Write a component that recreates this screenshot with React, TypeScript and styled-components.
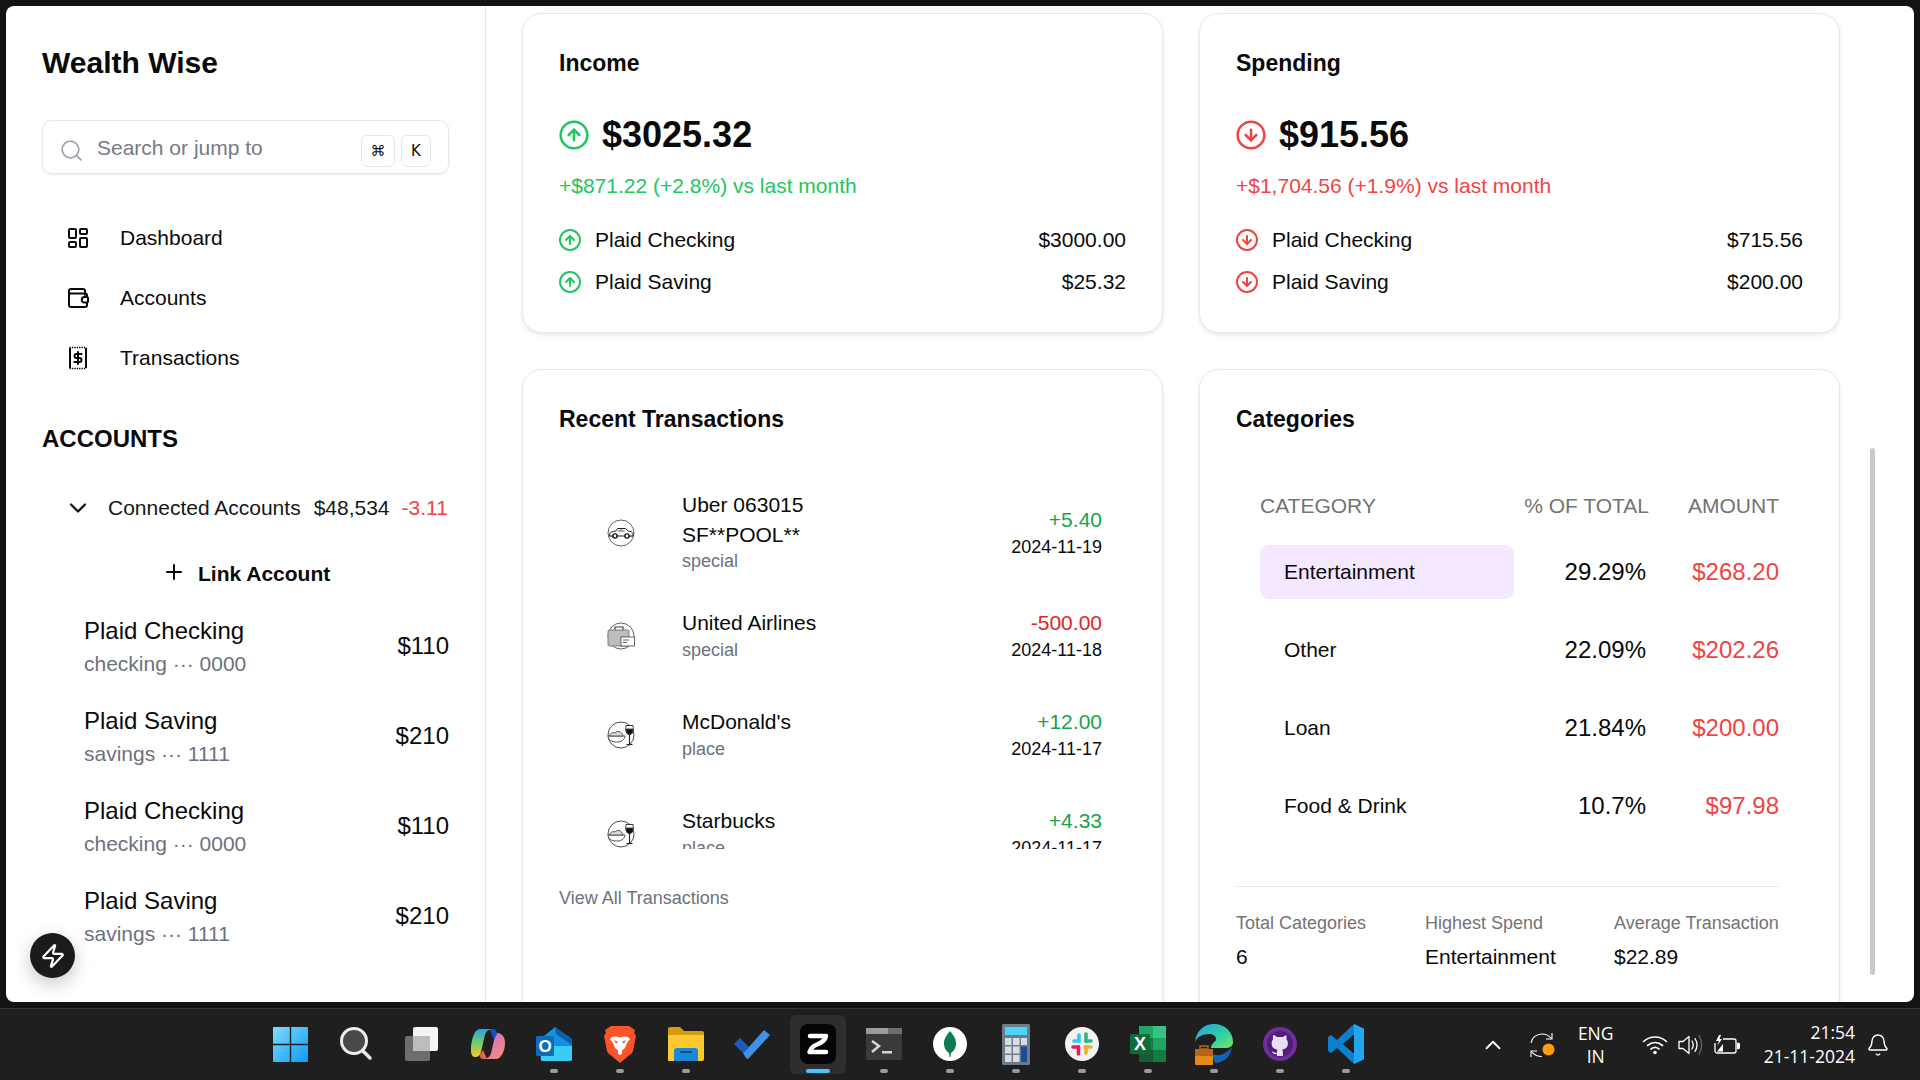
import React from "react";
import styled, { createGlobalStyle } from "styled-components";
import { CircleArrowUp, CircleArrowDown, LayoutDashboard, Search, ChevronDown, ChevronUp, Plus, Zap, Bell } from "lucide-react";

const Global = createGlobalStyle`
  html, body { margin: 0; padding: 0; width: 1920px; height: 1080px; overflow: hidden; background: #121312; }
  * { box-sizing: border-box; }
  body { font-family: "Liberation Sans", Arial, sans-serif; color: #0a0a0a; }
`;

const Screen = styled.div`
  width: 1920px; height: 1080px; display: flex; flex-direction: column; background: #121312;
`;
const Window = styled.div`
  position: relative; margin: 6px 6px 0; height: 996px; background: #fff; border-radius: 8px; overflow: hidden; display: flex; flex: none;
`;
const Sidebar = styled.aside`
  width: 480px; flex: none; border-right: 1px solid #e5e7eb; padding: 39px 36px 0; display: flex; flex-direction: column;
`;
const Brand = styled.h1`
  margin: 0; font-size: 30px; line-height: 36px; font-weight: 700; color: #0a0a0a;
`;
const SearchBox = styled.div`
  margin-top: 39px; height: 54px; border: 1px solid #e5e7eb; border-radius: 10px; display: flex; align-items: center;
  padding: 0 17px 0 17px; box-shadow: 0 1px 3px rgba(0,0,0,.08); color: #9ca3af;
`;
const SearchGlyph = styled.span` display: flex; margin-top: 7px; margin-left: -1px; `;
const Placeholder = styled.span`
  margin-left: 13px; font-size: 21px; color: #767b85; flex: 1; padding-top: 1px; margin-bottom: -1px;
`;
const Key = styled.span<{ $w: number }>`
  width: ${p => p.$w}px; height: 32px; border: 1px solid #e5e7eb; border-radius: 6px; display: flex; align-items: center; justify-content: center;
  font-size: 15px; color: #111; margin-left: 6px; margin-top: 8px; font-family: "DejaVu Sans", "Liberation Sans", sans-serif;
`;
const Nav = styled.nav`
  margin-top: 34px; display: flex; flex-direction: column;
`;
const NavItem = styled.a`
  height: 60px; display: flex; align-items: center; gap: 30px; padding-left: 24px; font-size: 21px; color: #0a0a0a;
`;
const SectionTitle = styled.h2`
  margin: 36px 0 0; font-size: 24px; line-height: 30px; font-weight: 700; color: #0a0a0a;
`;
const Connected = styled.div`
  margin-top: 34px; height: 40px; display: flex; align-items: center; padding-left: 22px; font-size: 21px; color: #171717;
`;
const ConnectedName = styled.span` margin-left: 16px; white-space: nowrap; `;
const ConnectedValue = styled.span` margin-left: 13px; white-space: nowrap; `;
const ConnectedDelta = styled.span` margin-left: 12px; color: #ef4444; white-space: nowrap; `;
const LinkRow = styled.div`
  margin-top: 24px; height: 40px; display: flex; align-items: center; padding-left: 120px; gap: 12px; font-size: 21px; font-weight: 700; color: #0a0a0a;
`;
const LinkLabel = styled.span` padding-top: 4px; `;
const AccountList = styled.div` margin-top: 10px; display: flex; flex-direction: column; `;
const AccountRow = styled.div`
  height: 90px; padding-left: 42px; display: flex; align-items: center; justify-content: space-between;
`;
const AccountInfo = styled.div` display: flex; flex-direction: column; gap: 3px; `;
const AccountName = styled.div` font-size: 24px; line-height: 30px; color: #0a0a0a; `;
const AccountSub = styled.div` font-size: 21px; line-height: 30px; color: #6b7280; white-space: pre; `;
const AccountValue = styled.div` font-size: 24px; color: #0a0a0a; margin-bottom: 2px; `;
const Fab = styled.button`
  position: absolute; left: 24px; bottom: 24px; width: 45px; height: 45px; border-radius: 50%; border: 0; background: #1b1b1b; color: #fff;
  display: flex; align-items: center; justify-content: center; box-shadow: 0 6px 18px rgba(0,0,0,.22); padding: 0;
`;

const Main = styled.main`
  flex: 1; min-width: 0; padding: 7px 0 0 36px; display: grid; grid-template-columns: 641px 641px; column-gap: 36px; row-gap: 36px;
  grid-template-rows: 320px 700px; align-content: start; overflow: hidden;
`;
const Card = styled.section`
  border: 1px solid #e8e9eb; border-radius: 20px; background: #fff; padding: 35px 36px 0; box-shadow: 0 2px 4px rgba(0,0,0,.09); display: flex; flex-direction: column;
`;
const CardTitle = styled.h3`
  margin: 0; font-size: 23px; line-height: 28px; font-weight: 700; color: #0a0a0a;
`;
const BigRow = styled.div`
  margin-top: 37px; height: 42px; display: flex; align-items: center; gap: 12px;
`;
const BigIcon = styled.span<{ $c: string }>` color: ${p => p.$c}; display: flex; margin-left: -1px; `;
const BigValue = styled.div` font-size: 36px; font-weight: 700; color: #0a0a0a; `;
const Delta = styled.div<{ $c: string }>`
  margin-top: 17px; font-size: 21px; line-height: 26px; color: ${p => p.$c};
`;
const FlowRow = styled.div`
  display: flex; align-items: center; height: 42px; font-size: 21px; color: #0a0a0a;
`;
const FlowList = styled.div` margin-top: 20px; display: flex; flex-direction: column; `;
const FlowIcon = styled.span<{ $c: string }>` color: ${p => p.$c}; display: flex; margin: 0 13px 0 -1px; `;
const FlowAmount = styled.span` margin-left: auto; `;

const TxList = styled.div`
  margin-top: 45px; height: 371px; overflow: hidden; display: flex; flex-direction: column; padding-right: 24px;
`;
const TxRow = styled.div`
  flex: none; min-height: 99px; padding: 12.4px 0; display: flex; align-items: center;
`;
const TxIconWrap = styled.span`
  width: 123px; flex: none; padding-left: 48px; display: flex; margin-top: 2px;
`;
const TxInfo = styled.div` flex: 1; min-width: 0; `;
const TxName = styled.div` font-size: 21px; line-height: 29.4px; color: #0a0a0a; `;
const TxSub = styled.div` font-size: 18px; line-height: 24px; color: #6b7280; `;
const TxSide = styled.div` text-align: right; `;
const TxAmount = styled.div<{ $c: string }>` font-size: 21px; line-height: 30px; color: ${p => p.$c}; `;
const TxDate = styled.div` font-size: 18px; line-height: 24px; color: #0a0a0a; `;
const ViewAll = styled.a` margin-top: 37px; font-size: 18px; line-height: 24px; color: #6b7280; `;

const CatTable = styled.div`
  margin-top: 59px; padding: 0 0 0 24px; margin-right: 24px; display: flex; flex-direction: column;
`;
const CatHead = styled.div`
  display: grid; grid-template-columns: 1fr 132px 130px; height: 28px; align-items: center; font-size: 21px; color: #737373;
`;
const HeadRight = styled.span` text-align: right; white-space: nowrap; `;
const CatRow = styled.div`
  display: grid; grid-template-columns: 254px 1fr 133px; height: 78px; align-items: center; font-size: 24px;
`;
const CatRows = styled.div` margin-top: 13px; `;
const CatName = styled.div<{ $on?: boolean }>`
  height: 54px; display: flex; align-items: center; padding-left: 24px; font-size: 21px; border-radius: 9px; color: #0a0a0a;
  background: ${p => (p.$on ? "#f3e8ff" : "transparent")};
`;
const CatPct = styled.div` text-align: right; color: #0a0a0a; `;
const CatAmt = styled.div` text-align: right; color: #ef4444; `;
const CatFoot = styled.div`
  margin: 41px 24px 0 0; border-top: 1px solid #e5e7eb; padding-top: 23px; display: grid; grid-template-columns: 189px 189px 1fr;
`;
const StatLabel = styled.div` font-size: 18px; line-height: 26px; color: #737373; white-space: nowrap; `;
const StatValue = styled.div` margin-top: 7px; font-size: 21px; line-height: 28px; color: #0a0a0a; `;
const Thumb = styled.div`
  position: absolute; left: 1864px; top: 442px; width: 5px; height: 527px; border-radius: 3px; background: #c9c9c9;
`;

const Taskbar = styled.footer`
  margin-top: 6px; flex: 1; background: #1f1f20; border-top: 1px solid #333; display: flex; align-items: stretch; padding-left: 257px; color: #fff;
`;
const Apps = styled.div` display: flex; align-items: stretch; `;
const AppSlot = styled.div<{ $active?: boolean }>`
  position: relative; width: 66px; display: flex; align-items: center; justify-content: center;
  &::before {
    content: ""; display: ${p => (p.$active ? "block" : "none")}; position: absolute; left: 5px; right: 5px; top: 6px; bottom: 6px;
    border-radius: 6px; background: #2e2e30;
  }
  & > svg { position: relative; margin-top: -1px; }
`;
const Dot = styled.span<{ $active?: boolean }>`
  position: absolute; bottom: 7px; left: 50%; transform: translateX(-50%); height: 4px; border-radius: 2px;
  width: ${p => (p.$active ? 24 : 8)}px; background: ${p => (p.$active ? "#4cc2ff" : "#9a9a9a")};
`;
const Tray = styled.div`
  margin-left: auto; display: flex; align-items: center; font-family: "Open Sans", "Noto Sans", sans-serif; padding-right: 30px;
`;
const TrayIcon = styled.span<{ $ml: number }>` display: flex; margin-left: ${p => p.$ml}px; color: #fff; `;
const Lang = styled.div`
  margin-left: 15px; width: 50px; text-align: center; font-size: 17.5px; line-height: 23px; color: #fff;
`;
const Clock = styled.div`
  margin-left: 24px; text-align: right; font-size: 17.5px; line-height: 24px; color: #fff; white-space: nowrap; margin-top: -2px;
`;

const WalletIcon = () => (
  <svg width="24" height="24" viewBox="0 0 24 24" fill="none" stroke="#0a0a0a" strokeWidth="2" strokeLinecap="round" strokeLinejoin="round">
    <path d="M19 9V5a2 2 0 0 0-2-2H5a2 2 0 0 0-2 2v14a2 2 0 0 0 2 2h14a2 2 0 0 0 2-2v-2.500" />
    <path d="M3 7.500h16a2 2 0 0 1 2 2V11" />
    <path d="M21 11h-2.500a2.700 2.700 0 0 0 0 5.500H21a1 1 0 0 0 1-1V12a1 1 0 0 0-1-1z" />
  </svg>
);
const ReceiptIcon = () => (
  <svg width="24" height="24" viewBox="0 0 24 24" fill="none" stroke="#0a0a0a" strokeWidth="2">
    <path d="M4 2v20M20 2v20" />
    <path d="M3.500 1.500h17M3.500 22.500h17" strokeWidth="1.600" strokeDasharray="1.400 1" />
    <path d="M15.500 8h-5a1.900 1.900 0 0 0 0 4h3a1.900 1.900 0 0 1 0 4h-5.200M12 6v12" strokeLinecap="round" />
  </svg>
);

const CarBadge = () => (
  <svg width="28" height="28" viewBox="0 0 28 28" fill="none" stroke="#3a3a3a" strokeWidth=".8">
    <circle cx="14" cy="14" r="13" />
    <path d="M1.500 17h5M21.500 17h5" />
    <path d="M2.500 15c1-2 3-2.500 6-2.800l2-2.700h8l3 2.700c2.500.3 4 .8 4.500 2.300v2.500H3z" fill="#fff" stroke="#222" strokeWidth="1" />
    <path d="M10.700 12h7M14 9.800V12" />
    <circle cx="8" cy="17" r="2.100" fill="#fff" stroke="#111" strokeWidth="1.400" />
    <circle cx="20" cy="17" r="2.100" fill="#fff" stroke="#111" strokeWidth="1.400" />
  </svg>
);
const BagBadge = () => (
  <svg width="28" height="28" viewBox="0 0 28 28" fill="none" stroke="#3a3a3a" strokeWidth=".8">
    <circle cx="14" cy="14" r="13" />
    <path d="M8 8V5h8v3" strokeWidth="1.100" />
    <rect x="1" y="8" width="21" height="16" rx="1.500" fill="#bdbdbd" stroke="#666" />
    <rect x="14" y="15" width="13.500" height="9" fill="#fff" stroke="#444" />
    <path d="M16 18h6M16 20.500h4" />
  </svg>
);
const FoodBadge = () => (
  <svg width="28" height="28" viewBox="0 0 28 28" fill="none" stroke="#3a3a3a" strokeWidth=".9">
    <circle cx="14" cy="14" r="13" />
    <path d="M1 15h17c-.5 4-3.500 6-8.500 6S1.500 19 1 15z" fill="#fff" />
    <path d="M2.500 15c.5-3 3.500-4 5.500-3 1-2 5-2 6.500 0 1 1 1.500 2 1.500 3z" fill="#d8d8d8" stroke="#444" />
    <path d="M19 4.500h7c.8 5-.2 9-3.500 9s-4.300-4-3.500-9z" fill="#fff" stroke="#222" />
    <path d="M19.100 8h6.800c.2 3-.8 5.500-3.400 5.500S19 11 19.100 8z" fill="#111" />
    <path d="M22.500 13.500V23M19.500 23.500h6" strokeWidth="1.100" stroke="#222" />
  </svg>
);

const WinLogo = () => (
  <svg width="35" height="35" viewBox="0 0 35 35">
    <defs><linearGradient id="w" x1="0" y1="0" x2="1" y2="1"><stop offset="0" stopColor="#7fdcff" /><stop offset="1" stopColor="#0c9bf5" /></linearGradient></defs>
    <path d="M0 1a1 1 0 0 1 1-1h15.800v16.800H0zM18.200 0H34a1 1 0 0 1 1 1v15.800H18.200zM0 18.200h16.800V35H1a1 1 0 0 1-1-1zM18.200 18.200H35V34a1 1 0 0 1-1 1H18.200z" fill="url(#w)" />
  </svg>
);
const SearchLogo = () => (
  <svg width="34" height="36" viewBox="0 0 34 36" fill="none"><circle cx="15" cy="15" r="12.500" fill="#4a4849" stroke="#ededed" strokeWidth="3" /><path d="M24 25l7 7" stroke="#ededed" strokeWidth="3.500" strokeLinecap="round" /></svg>
);
const ViewLogo = () => (
  <svg width="36" height="36" viewBox="0 0 36 36">
    <rect x="1" y="10" width="25" height="25" rx="2" fill="#6e6e6e" />
    <rect x="9" y="1" width="25" height="24" rx="2" fill="#f4f4f4" />
    <rect x="9" y="10" width="17" height="15" fill="#bdbdbd" />
  </svg>
);
const CopilotLogo = () => (
  <svg width="36" height="36" viewBox="0 0 36 36" fill="none">
    <defs>
      <linearGradient id="c1" x1="0" y1="0" x2="0" y2="1"><stop offset="0" stopColor="#22a4e8" /><stop offset=".55" stopColor="#7ecf5a" /><stop offset="1" stopColor="#f7c531" /></linearGradient>
      <linearGradient id="c2" x1="0" y1="0" x2="1" y2="1"><stop offset="0" stopColor="#c86be8" /><stop offset="1" stopColor="#f8906a" /></linearGradient>
    </defs>
    <path d="M10 3h13l-4 1c-3 1-4 4-5 9l-3 13c-1 4-3 5-6 5-3 0-4-3-4-7 0-9 3-21 9-21z" fill="url(#c1)" />
    <path d="M26 33H13l4-1c3-1 4-4 5-9l3-13 2-3c3 0 8 2 8 10s-4 16-9 16z" fill="url(#c2)" />
    <path d="M22 3c3 0 5 1 5 5l-3 6-4-10z" fill="#1a4fc4" />
    <path d="M14 33c-3 0-4-1-4-4l3-5 4 9z" fill="#f0605a" />
  </svg>
);
const OutlookLogo = () => (
  <svg width="36" height="36" viewBox="0 0 36 36">
    <path d="M3 14L19 1l17 12v20a2 2 0 0 1-2 2H5z" fill="#1490df" />
    <path d="M19 1l17 12v6L20 8z" fill="#0a5fa8" />
    <path d="M5 20h31v13a2 2 0 0 1-2 2H7a2 2 0 0 1-2-2z" fill="#3ccbf4" />
    <rect x="0" y="10" width="18" height="20" rx="1.500" fill="#0f6cbd" />
    <text x="9" y="25.500" textAnchor="middle" fontFamily="Liberation Sans" fontWeight="700" fontSize="17" fill="#fff">O</text>
  </svg>
);
const BraveLogo = () => (
  <svg width="32" height="38" viewBox="0 0 32 38">
    <path d="M7 1h18l3 2 3 2-1 3 2 3-3 15c-.5 2-2 3-4 4.500L16 38 7 30.500C5 29 3.500 28 3 26L0 11l2-3-1-3 3-2z" fill="#fb542b" />
    <path d="M8 12c3-1 5-.5 8 .5 3-1 5-1.500 8-.5l2 2-3 4-2 5-3 2.500V29l-2 1-2-1v-3.500L11 23l-2-5-3-4z" fill="#fff" />
    <path d="M10 15l4 2-2 1.500zM22 15l-4 2 2 1.500z" fill="#f04d24" />
  </svg>
);
const FolderLogo = () => (
  <svg width="36" height="34" viewBox="0 0 36 34">
    <path d="M0 2a2 2 0 0 1 2-2h10l4 4h18a2 2 0 0 1 2 2v6H0z" fill="#d49d10" />
    <path d="M0 8h36v24a2 2 0 0 1-2 2H0z" fill="#fdc830" />
    <path d="M6 34V24a3 3 0 0 1 3-3h18a3 3 0 0 1 3 3v10z" fill="#1b88d6" />
    <rect x="12" y="24" width="12" height="2" fill="#0c4d85" />
  </svg>
);
const TodoLogo = () => (
  <svg width="36" height="30" viewBox="0 0 36 30">
    <path d="M0 15l6-6 9 9-6 6z" fill="#185abd" />
    <path d="M9 24l6-6L30 1l6 5-21 23a2 2 0 0 1-3 0z" fill="#3f92e4" />
  </svg>
);
const ZenLogo = () => (
  <svg width="36" height="40" viewBox="0 0 36 40">
    <rect width="36" height="40" rx="8" fill="#050505" />
    <path d="M10 12h16c-1 5-5 7-9 8.500s-6 3-7.500 7.500H26" fill="none" stroke="#fff" strokeWidth="4.500" strokeLinecap="round" strokeLinejoin="round" />
  </svg>
);
const TerminalLogo = () => (
  <svg width="36" height="32" viewBox="0 0 36 32">
    <rect width="36" height="32" rx="2" fill="#3a3a3a" />
    <rect width="36" height="6" fill="#9b9b9b" />
    <rect x="22" width="14" height="6" fill="#6d6d6d" />
    <path d="M6 13l7 5-7 6" fill="none" stroke="#d6d6d6" strokeWidth="2.500" />
    <rect x="16" y="23" width="10" height="2.500" fill="#d6d6d6" />
  </svg>
);
const MongoLogo = () => (
  <svg width="34" height="34" viewBox="0 0 34 34">
    <circle cx="17" cy="17" r="17" fill="#fff" />
    <path d="M17 4c4 4.500 6.500 9 6 14-.5 4-3 6.500-5 8l-.5 4h-1l-.5-4c-2-1.500-4.500-4-5-8-.5-5 2-9.500 6-14z" fill="#0f7c4e" />
  </svg>
);
const CalcLogo = () => (
  <svg width="28" height="41" viewBox="0 0 28 41">
    <rect width="28" height="41" rx="1.500" fill="#6d7c88" />
    <rect x="3" y="3" width="22" height="8" fill="#4cd3f5" />
    {[0, 1, 2].map(r => [0, 1].map(c => <rect key={`${r}${c}`} x={3 + c * 8} y={14 + r * 8.5} width="6.500" height="7" fill="#d7dde2" />))}
    <rect x="19" y="14" width="6" height="7" fill="#d7dde2" />
    <rect x="19" y="22.500" width="6" height="15.500" fill="#1e4c9a" />
  </svg>
);
const SlackLogo = () => (
  <svg width="34" height="34" viewBox="0 0 34 34">
    <circle cx="17" cy="17" r="17" fill="#f3f3f3" />
    <g fill="none" strokeWidth="3.600" strokeLinecap="round">
      <path d="M14 8v6H9" stroke="#36c5f0" />
      <path d="M21 7v7.500" stroke="#2eb67d" />
      <path d="M21 14h5" stroke="#2eb67d" />
      <path d="M20 20h6" stroke="#ecb22e" />
      <path d="M21 20v6" stroke="#ecb22e" />
      <path d="M13.500 20v7" stroke="#e01e5a" />
      <path d="M8 20h5.500" stroke="#e01e5a" />
    </g>
  </svg>
);
const ExcelLogo = () => (
  <svg width="36" height="38" viewBox="0 0 36 38">
    <path d="M9 1h25a2 2 0 0 1 2 2v32a2 2 0 0 1-2 2H9z" fill="#185c37" />
    <rect x="9" y="1" width="14" height="12" fill="#21a366" />
    <rect x="23" y="1" width="13" height="12" fill="#33c481" />
    <rect x="9" y="13" width="14" height="12" fill="#107c41" />
    <rect x="23" y="13" width="13" height="12" fill="#21a366" />
    <rect x="23" y="25" width="13" height="12" fill="#107c41" />
    <rect x="0" y="9" width="20" height="20" rx="1.500" fill="#0f6b3a" />
    <text x="10" y="25" textAnchor="middle" fontFamily="Liberation Sans" fontWeight="700" fontSize="18" fill="#fff">X</text>
  </svg>
);
const EdgeLogo = () => (
  <svg width="38" height="42" viewBox="0 0 38 42">
    <defs><linearGradient id="e" x1="0" y1="0" x2="1" y2="1"><stop offset="0" stopColor="#2a9fe0" /><stop offset=".6" stopColor="#2fd2a4" /><stop offset="1" stopColor="#7fe35a" /></linearGradient></defs>
    <path d="M0 19C1 8 9 1 19 1c11 0 19 8 19 18 0 4-3 6-8 6H16c0-5 5-6 5-9 0-3-3-5-7-5C7 11 2 14 0 19z" fill="url(#e)" />
    <path d="M16 30c4 3 10 3 14 0 2-1.500 5-3 7-6-1 9-8 16-17 16z" fill="#1463b8" />
    <rect x="0" y="26" width="18" height="16" rx="1" fill="#e48a1a" />
    <rect x="0" y="26" width="18" height="7" fill="#b5641a" />
    <rect x="5" y="23" width="8" height="3" fill="none" stroke="#b5641a" strokeWidth="1.500" />
  </svg>
);
const GithubLogo = () => (
  <svg width="34" height="34" viewBox="0 0 34 34">
    <circle cx="17" cy="17" r="17" fill="#6e2f9c" />
    <circle cx="17" cy="17" r="13" fill="#4f1e78" />
    <path d="M11 8l3.500 2.200c1.700-.4 3.300-.4 5 0L23 8c.8 1.500.8 3 .4 4.300 1 1.200 1.500 2.500 1.500 4 0 4-2.500 6-6 6.500.8.700 1 1.500 1 2.700V29h-6v-2c-2.500.5-4-.3-5-2.500l2 .5c1 1 2 1.200 3 1v-1.500c.1-.7.300-1 .7-1.700-3.500-.5-6-2.500-6-6.500 0-1.500.5-2.800 1.500-4-.4-1.300-.4-2.800.4-4.300z" fill="#e9dff2" />
  </svg>
);
const VSCodeLogo = () => (
  <svg width="36" height="40" viewBox="0 0 36 40">
    <path d="M26 0l10 4.800v30.400L26 40 9 24l-6 5-3-2V13l3-2 6 5zM26 10.500L15 20l11 9.500z" fill="#0d7fcf" />
    <path d="M26 0l10 4.800v30.400L26 40z" fill="#22a6f0" />
    <path d="M26 10.500L15 20l11 9.500z" fill="#1f1f20" />
  </svg>
);
const SyncIcon = () => (
  <svg width="26" height="26" viewBox="0 0 26 26" fill="none" stroke="#fff" strokeWidth="1.100">
    <path d="M1 11c.8-5.500 5.500-9 11-9 4 0 7 1.500 9.500 4.500" />
    <path d="M22 1v6h-6" />
    <path d="M1 25v-6h6" />
    <path d="M1.500 19.500C4 23 7.500 24.500 12 24.500" />
    <circle cx="18.500" cy="17.500" r="6" fill="#ff9d0a" stroke="none" />
  </svg>
);
const WifiIcon = () => (
  <svg width="26" height="20" viewBox="0 0 26 20" fill="none" stroke="#fff" strokeWidth="1.700" strokeLinecap="round">
    <path d="M1.500 6.500c6.500-6 16.500-6 23 0M5.500 10.500c4.500-4 10.500-4 15 0M9 14c2.500-2 5.500-2 8 0" />
    <circle cx="13" cy="17.500" r="1.800" fill="#fff" stroke="none" />
  </svg>
);
const SpeakerIcon = () => (
  <svg width="26" height="22" viewBox="0 0 26 22" fill="none" stroke="#fff" strokeWidth="1.300" strokeLinecap="round" strokeLinejoin="round">
    <path d="M1 7.500v7h4l6 5v-17l-6 5z" />
    <path d="M14 7c1.500 2.500 1.500 5.500 0 8M17 4.500c2.500 4 2.500 9 0 13" />
    <path d="M21 1.500c3.500 5.500 3.500 13 0 19" stroke="#666" />
  </svg>
);
const BatteryIcon = () => (
  <svg width="26" height="22" viewBox="0 0 26 22" fill="none" stroke="#fff" strokeWidth="1.300">
    <path d="M9 5h11a2 2 0 0 1 2 2v10a2 2 0 0 1-2 2H3a2 2 0 0 1-2-2V9" />
    <path d="M23 9.500h1.500a1 1 0 0 1 1 1v3a1 1 0 0 1-1 1H23" fill="#fff" />
    <path d="M5 1L2 7h3L3 12l5-7H5.500L7 1z" fill="#fff" stroke="none" />
    <path d="M3 17.500L9 10v7.500z" fill="#fff" stroke="none" />
  </svg>
);

const nav = [
  { icon: <LayoutDashboard size={24} strokeWidth={2} />, label: "Dashboard" },
  { icon: <WalletIcon />, label: "Accounts" },
  { icon: <ReceiptIcon />, label: "Transactions" },
];
const accounts = [
  { name: "Plaid Checking", sub: "checking ··· 0000", value: "$110" },
  { name: "Plaid Saving", sub: "savings ··· 1111", value: "$210" },
  { name: "Plaid Checking", sub: "checking ··· 0000", value: "$110" },
  { name: "Plaid Saving", sub: "savings ··· 1111", value: "$210" },
];
const GREEN = "#22c55e";
const RED = "#ef4444";
const txs = [
  { icon: <CarBadge />, name: "Uber 063015 SF**POOL**", sub: "special", amt: "+5.40", color: "#16a34a", date: "2024-11-19" },
  { icon: <BagBadge />, name: "United Airlines", sub: "special", amt: "-500.00", color: "#dc2626", date: "2024-11-18" },
  { icon: <FoodBadge />, name: "McDonald's", sub: "place", amt: "+12.00", color: "#16a34a", date: "2024-11-17" },
  { icon: <FoodBadge />, name: "Starbucks", sub: "place", amt: "+4.33", color: "#16a34a", date: "2024-11-17" },
];
const cats = [
  { name: "Entertainment", pct: "29.29%", amt: "$268.20", on: true },
  { name: "Other", pct: "22.09%", amt: "$202.26" },
  { name: "Loan", pct: "21.84%", amt: "$200.00" },
  { name: "Food & Drink", pct: "10.7%", amt: "$97.98" },
];
const apps = [
  { el: <WinLogo /> }, { el: <SearchLogo /> }, { el: <ViewLogo /> }, { el: <CopilotLogo /> },
  { el: <OutlookLogo />, dot: true }, { el: <BraveLogo />, dot: true }, { el: <FolderLogo />, dot: true }, { el: <TodoLogo /> },
  { el: <ZenLogo />, active: true }, { el: <TerminalLogo />, dot: true }, { el: <MongoLogo />, dot: true }, { el: <CalcLogo />, dot: true },
  { el: <SlackLogo />, dot: true }, { el: <ExcelLogo />, dot: true }, { el: <EdgeLogo />, dot: true }, { el: <GithubLogo />, dot: true }, { el: <VSCodeLogo />, dot: true },
];

function SummaryCard(p: { title: string; total: string; delta: string; color: string; up: boolean; rows: [string, string][] }) {
  const Icon = p.up ? CircleArrowUp : CircleArrowDown;
  return (
    <Card>
      <CardTitle>{p.title}</CardTitle>
      <BigRow>
        <BigIcon $c={p.color}><Icon size={32} strokeWidth={1.9} /></BigIcon>
        <BigValue>{p.total}</BigValue>
      </BigRow>
      <Delta $c={p.color}>{p.delta}</Delta>
      <FlowList>
        {p.rows.map(([n, v]) => (
          <FlowRow key={n}>
            <FlowIcon $c={p.color}><Icon size={24} strokeWidth={2} /></FlowIcon>
            {n}
            <FlowAmount>{v}</FlowAmount>
          </FlowRow>
        ))}
      </FlowList>
    </Card>
  );
}

export default function App() {
  return (
    <Screen>
      <Global />
      <Window>
        <Sidebar>
          <Brand>Wealth Wise</Brand>
          <SearchBox>
            <SearchGlyph><Search size={25} strokeWidth={1.6} /></SearchGlyph>
            <Placeholder>Search or jump to</Placeholder>
            <Key $w={34}>⌘</Key>
            <Key $w={30}>K</Key>
          </SearchBox>
          <Nav>
            {nav.map(n => <NavItem key={n.label}>{n.icon}{n.label}</NavItem>)}
          </Nav>
          <SectionTitle>ACCOUNTS</SectionTitle>
          <Connected>
            <ChevronDown size={28} strokeWidth={2} />
            <ConnectedName>Connected Accounts</ConnectedName>
            <ConnectedValue>$48,534</ConnectedValue>
            <ConnectedDelta>-3.11</ConnectedDelta>
          </Connected>
          <LinkRow>
            <Plus size={24} strokeWidth={2} />
            <LinkLabel>Link Account</LinkLabel>
          </LinkRow>
          <AccountList>
            {accounts.map((a, i) => (
              <AccountRow key={i}>
                <AccountInfo>
                  <AccountName>{a.name}</AccountName>
                  <AccountSub>{a.sub}</AccountSub>
                </AccountInfo>
                <AccountValue>{a.value}</AccountValue>
              </AccountRow>
            ))}
          </AccountList>
        </Sidebar>
        <Main>
          <SummaryCard title="Income" total="$3025.32" delta="+$871.22 (+2.8%) vs last month" color={GREEN} up rows={[["Plaid Checking", "$3000.00"], ["Plaid Saving", "$25.32"]]} />
          <SummaryCard title="Spending" total="$915.56" delta="+$1,704.56 (+1.9%) vs last month" color={RED} up={false} rows={[["Plaid Checking", "$715.56"], ["Plaid Saving", "$200.00"]]} />
          <Card>
            <CardTitle>Recent Transactions</CardTitle>
            <TxList>
              {txs.map(t => (
                <TxRow key={t.name}>
                  <TxIconWrap>{t.icon}</TxIconWrap>
                  <TxInfo>
                    <TxName>{t.name.includes("SF") ? <>Uber 063015<br />SF**POOL**</> : t.name}</TxName>
                    <TxSub>{t.sub}</TxSub>
                  </TxInfo>
                  <TxSide>
                    <TxAmount $c={t.color}>{t.amt}</TxAmount>
                    <TxDate>{t.date}</TxDate>
                  </TxSide>
                </TxRow>
              ))}
            </TxList>
            <ViewAll>View All Transactions</ViewAll>
          </Card>
          <Card>
            <CardTitle>Categories</CardTitle>
            <CatTable>
              <CatHead>
                <span>CATEGORY</span>
                <HeadRight>% OF TOTAL</HeadRight>
                <HeadRight>AMOUNT</HeadRight>
              </CatHead>
              <CatRows>
                {cats.map(c => (
                  <CatRow key={c.name}>
                    <CatName $on={c.on}>{c.name}</CatName>
                    <CatPct>{c.pct}</CatPct>
                    <CatAmt>{c.amt}</CatAmt>
                  </CatRow>
                ))}
              </CatRows>
            </CatTable>
            <CatFoot>
              <div><StatLabel>Total Categories</StatLabel><StatValue>6</StatValue></div>
              <div><StatLabel>Highest Spend</StatLabel><StatValue>Entertainment</StatValue></div>
              <div><StatLabel>Average Transaction</StatLabel><StatValue>$22.89</StatValue></div>
            </CatFoot>
          </Card>
        </Main>
        <Thumb />
        <Fab aria-label="Actions"><Zap size={26} strokeWidth={2} /></Fab>
      </Window>
      <Taskbar>
        <Apps>
          {apps.map((a, i) => (
            <AppSlot key={i} $active={a.active}>
              {a.el}
              {(a.dot || a.active) && <Dot $active={a.active} />}
            </AppSlot>
          ))}
        </Apps>
        <Tray>
          <TrayIcon $ml={0}><ChevronUp size={26} strokeWidth={1.7} /></TrayIcon>
          <TrayIcon $ml={24}><SyncIcon /></TrayIcon>
          <Lang>ENG<br />IN</Lang>
          <TrayIcon $ml={21}><WifiIcon /></TrayIcon>
          <TrayIcon $ml={10}><SpeakerIcon /></TrayIcon>
          <TrayIcon $ml={10}><BatteryIcon /></TrayIcon>
          <Clock>21:54<br />21-11-2024</Clock>
          <TrayIcon $ml={11}><Bell size={24} strokeWidth={1.4} /></TrayIcon>
        </Tray>
      </Taskbar>
    </Screen>
  );
}
